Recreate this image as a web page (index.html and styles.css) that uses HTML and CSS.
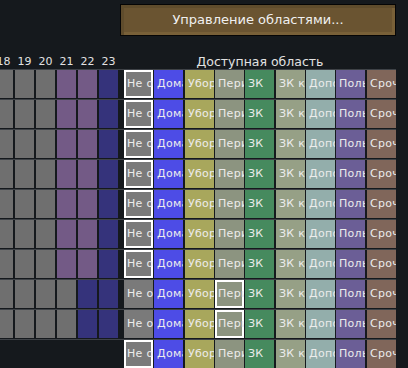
FILE: index.html
```html
<!DOCTYPE html>
<html lang="ru">
<head>
    <meta charset="UTF-8">
    <title>Области</title>
    <link rel="stylesheet" href="styles.css">
</head>
<body>
    <div class="topbar">
        <div class="manage-btn">Управление областями...</div>
    </div>
    <div class="table">
        <div class="head">
            <div class="hours">
                <span class="hour">18</span><span class="hour">19</span><span class="hour">20</span>
                <span class="hour">21</span><span class="hour">22</span><span class="hour">23</span>
            </div>
            <div class="title">Доступная область</div>
        </div>
    </div>
    <script>
        // расписание: g - любая работа, p - отдых, b - сон
        var plan = ["gggppb","gggppb","gggppb","gggppb","gggppb","gggppb","gggppb","ggggbb","ggggbb",""],
            sel = [0,0,0,0,0,0,0,3,3,0],
            areas = [
                ["a-none","Не ограничено"],
                ["a-home","Домашняя область"],
                ["a-clean","Уборка"],
                ["a-perim","Периметр"],
                ["a-zk","ЗК"],
                ["a-zkk","ЗК казарма"],
                ["a-extra","Дополнительная"],
                ["a-user","Пользовательская"],
                ["a-urgent","Срочная"]
            ],
            oTable = document.querySelector(".table");
        for(var i=0; i<plan.length; i++){
            var html = '<div class="row"><div class="hours">';
            for(var j=0; j<plan[i].length; j++){
                html += '<span class="slot s-' + plan[i][j] + '"></span>';
            }
            html += '</div><div class="areas">';
            for(var k=0; k<areas.length; k++){
                html += '<span class="area ' + areas[k][0] + (sel[i]==k ? ' sel' : '') + '"><span class="name">' + areas[k][1] + '</span></span>';
            }
            html += '</div></div>';
            oTable.insertAdjacentHTML("beforeend", html);
        }
    </script>
</body>
</html>
```
FILE: styles.css
```css
body{margin:0;padding:0;}
body{
    background-color: #15191d;
    color: #e2e2e2;
    font-family: "DejaVu Sans", sans-serif;
    overflow: hidden;
}
.topbar{
    height: 36px;
    padding: 4px 0 0 120px;
    box-sizing: border-box;
}
.manage-btn{
    width: 276px;
    height: 32px;
    box-sizing: border-box;
    border: 1px solid #050505;
    background-color: #6a5431;
    box-shadow: inset 3px 3px 0 #5f4c2c, inset -3px -3px 0 #786038;
    font-size: 13px;
    line-height: 30px;
    text-align: center;
    color: #f0f0f0;
}
.head{
    display: flex;
    align-items: flex-end;
    height: 33px;
}
.hours{
    display: flex;
    gap: 2px;
    width: 130px;
    margin-left: -6px;
    flex-shrink: 0;
}
.hour{
    width: 19px;
    font-size: 11px;
    line-height: 14px;
    text-align: center;
}
.title{
    width: 272px;
    font-size: 12.5px;
    line-height: 15px;
    text-align: center;
}
.row{
    display: flex;
    width: 396px;
    height: 28px;
    border-top: 1px solid #3e4247;
    padding-bottom: 1px;
}
.slot{
    width: 19px;
    height: 28px;
}
.s-g{background-color: #6f6f6f;}
.s-p{background-color: #735a86;}
.s-b{background-color: #35337b;}
.areas{
    display: flex;
    gap: 1px;
}
.area{
    width: 29px;
    height: 28px;
    box-sizing: border-box;
    padding-left: 3px;
    overflow: hidden;
    font-size: 11px;
    line-height: 28px;
    letter-spacing: 0.3px;
    color: #ececec;
}
.area .name{
    display: block;
    width: 26px;
    overflow: hidden;
    white-space: nowrap;
}
.area:nth-child(3n){
    margin-left: 1px;
}
.area.sel{
    box-shadow: inset 0 0 0 2px #ffffff;
}
.a-none{background-color: #7a7a7a;}
.a-home{background-color: #4d4ce6;}
.a-clean{background-color: #a8a75c;}
.a-perim{background-color: #8c9480;}
.a-zk{background-color: #468a5e;}
.a-zkk{background-color: #96a086;}
.a-extra{background-color: #93aeab;}
.a-user{background-color: #6b5e96;}
.a-urgent{background-color: #80665a;}
```
